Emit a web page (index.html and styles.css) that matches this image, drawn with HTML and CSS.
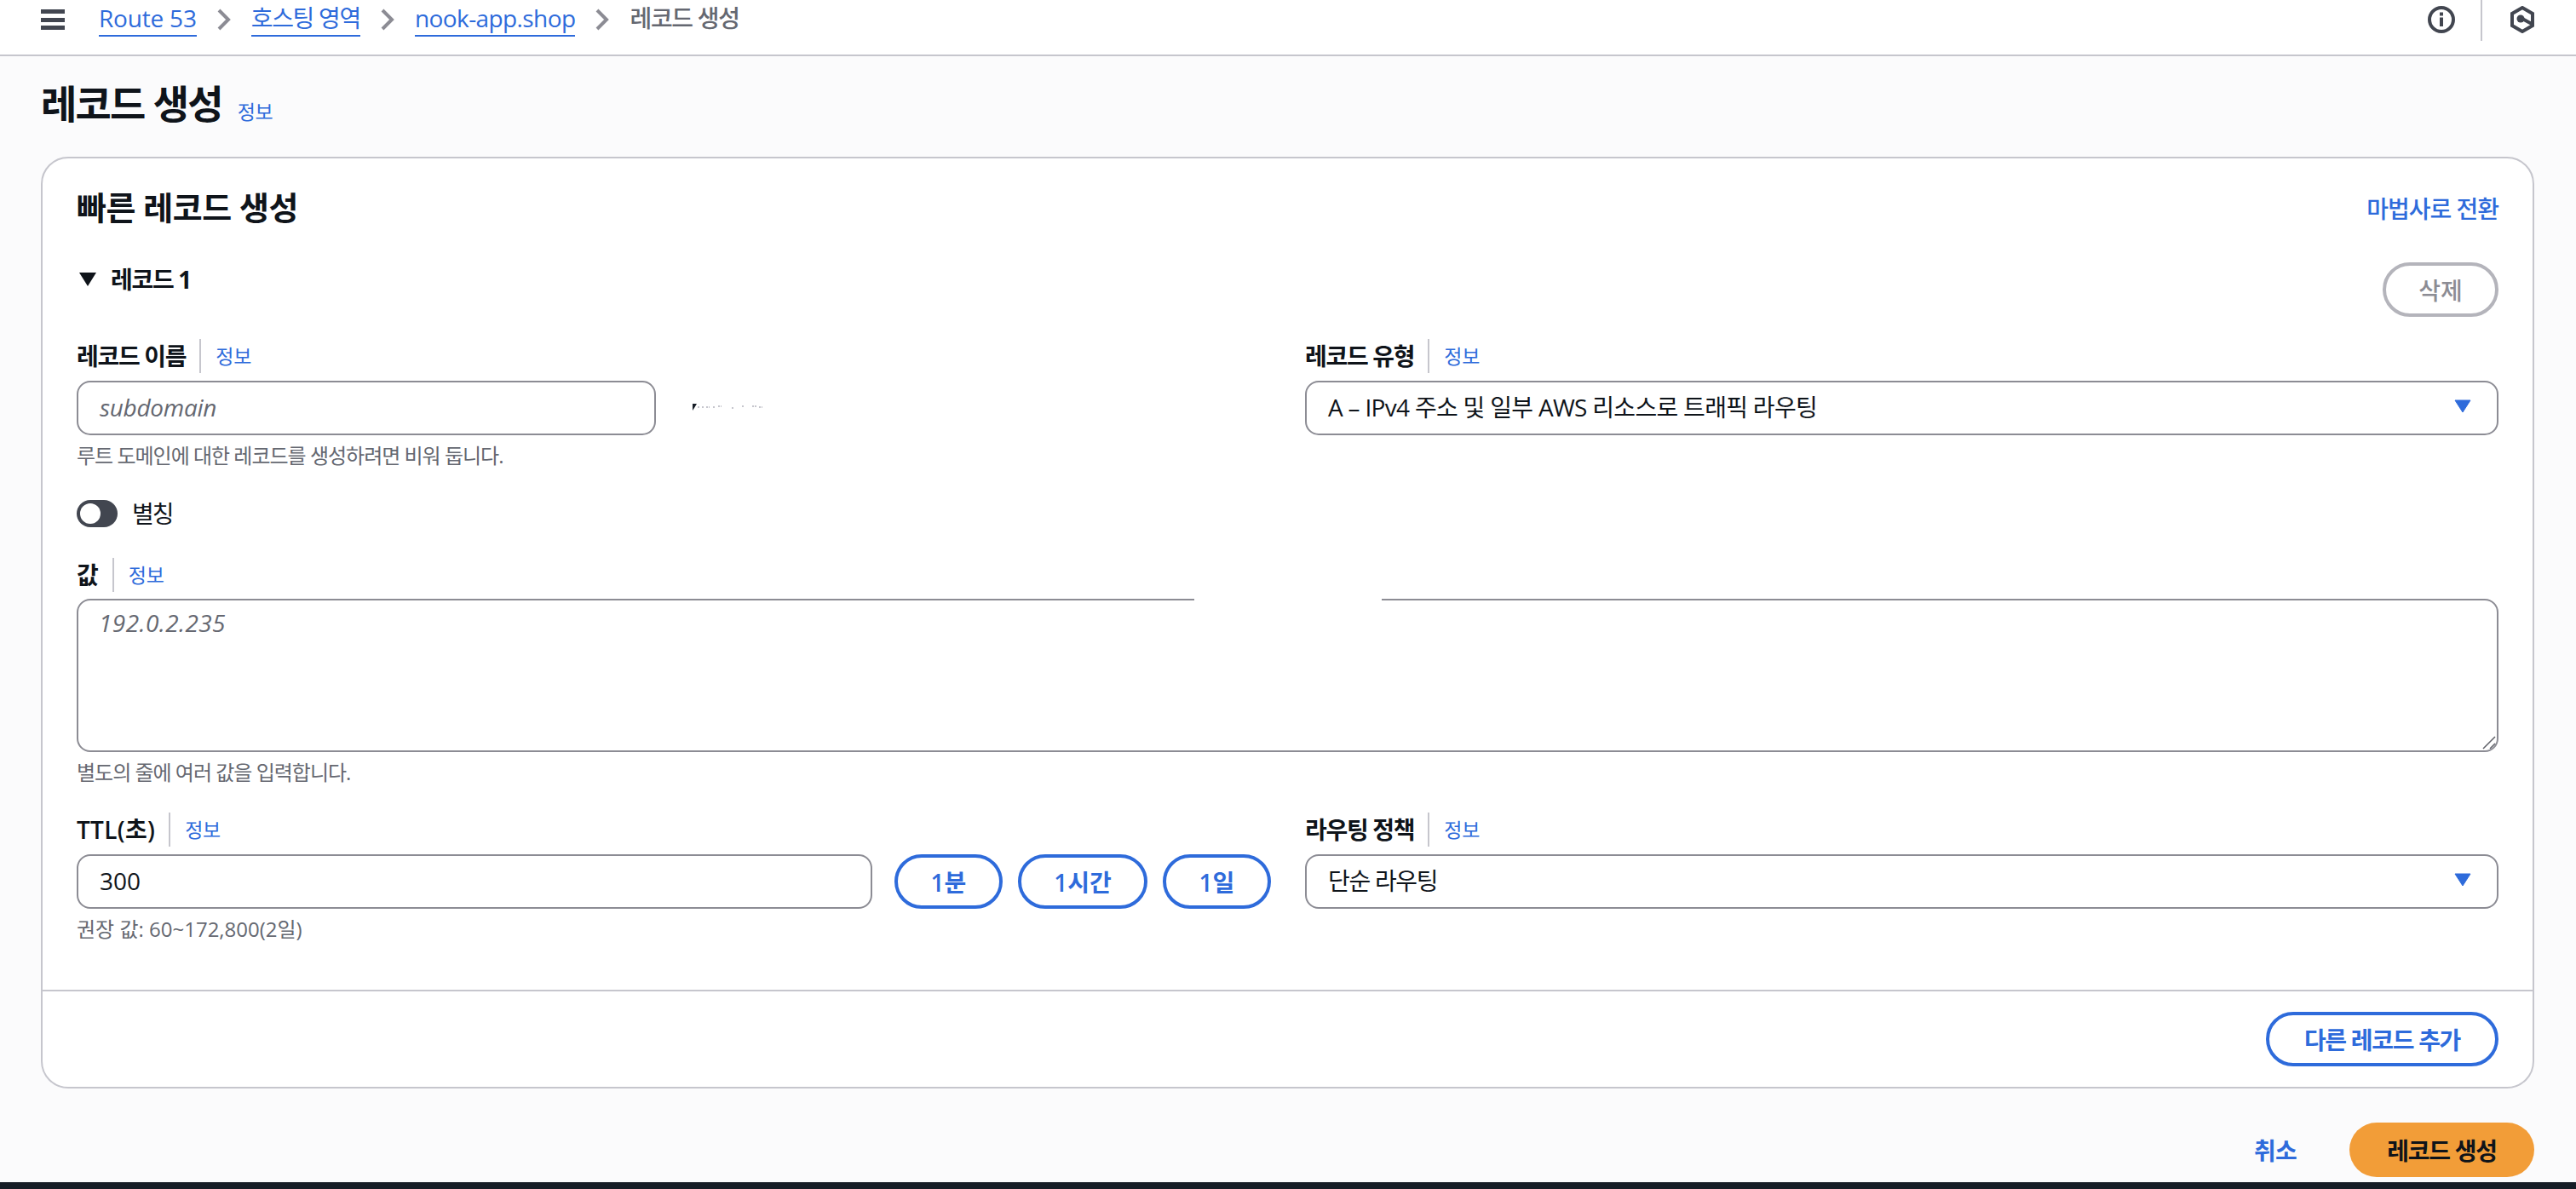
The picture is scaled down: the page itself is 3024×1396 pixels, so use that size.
FILE: index.html
```html
<!DOCTYPE html>
<html lang="ko">
<head>
<meta charset="utf-8">
<title>레코드 생성</title>
<link rel="stylesheet" href="styles.css">
</head>
<body>
<header class="topbar">
  <svg class="burger" width="28" height="24" viewBox="0 0 28 24"><path d="M0 0h28v5H0zM0 10h28v5H0zM0 19h28v5H0z" fill="#424650"/></svg>
  <nav class="crumbs">
    <a class="crumb crumb-latin">Route 53</a>
    <svg class="chev" width="18" height="26" viewBox="0 0 18 26"><path d="M3 2l11 11L3 24" fill="none" stroke="#8c8c94" stroke-width="4"/></svg>
    <a class="crumb ko">호스팅 영역</a>
    <svg class="chev" width="18" height="26" viewBox="0 0 18 26"><path d="M3 2l11 11L3 24" fill="none" stroke="#8c8c94" stroke-width="4"/></svg>
    <a class="crumb crumb-domain">nook-app.shop</a>
    <svg class="chev" width="18" height="26" viewBox="0 0 18 26"><path d="M3 2l11 11L3 24" fill="none" stroke="#8c8c94" stroke-width="4"/></svg>
    <span class="crumb-current ko">레코드 생성</span>
  </nav>
  <div class="top-icons">
    <svg width="32" height="32" viewBox="0 0 32 32"><circle cx="16" cy="16" r="14" fill="none" stroke="#424650" stroke-width="4"/><path d="M14 13.500h4V24h-4zM14 7.500h4v4h-4z" fill="#424650"/></svg>
    <span class="top-sep"></span>
    <svg width="30" height="32" viewBox="0 0 30 32"><path d="M15 2l12 7v14l-12 7-12-7V9z" fill="none" stroke="#424650" stroke-width="4"/><circle cx="13" cy="15" r="4.500" fill="#424650"/><path d="M15 15l11 6" stroke="#424650" stroke-width="4"/></svg>
  </div>
</header>

<main class="page">
  <div class="title-row">
    <h1 class="title">레코드 생성</h1>
    <a class="info info-title">정보</a>
  </div>

  <section class="card">
    <div class="card-body">
      <div class="card-head">
        <h2 class="card-title">빠른 레코드 생성</h2>
        <a class="wizard">마법사로 전환</a>
      </div>
      <div class="record-head">
        <div class="record-title"><svg width="22" height="18" viewBox="0 0 22 18"><path d="M1 1h20L11 17z" fill="#0f141a"/></svg><span class="ko">레코드 1</span></div>
        <button class="btn btn-disabled">삭제</button>
      </div>

      <div class="two-col row-name">
        <div class="field">
          <div class="label-row"><span class="label ko">레코드 이름</span><a class="info">정보</a></div>
          <div class="name-line">
            <div class="control control-name placeholder">subdomain</div>
            <svg class="smudge" width="92" height="10" viewBox="0 0 92 10"><path d="M0 1v8l2-3 3-5z" fill="#161d26"/><path d="M6 5h3M11 5h3M16 5h4M24 5h3M30 4h4M46 6h2M58 4h2M70 4h6M78 5h4" stroke="#c6c6cd" stroke-width="2" stroke-dasharray="2 1"/></svg>
          </div>
          <p class="hint ko-hint">루트 도메인에 대한 레코드를 생성하려면 비워 둡니다.</p>
        </div>
        <div class="field">
          <div class="label-row"><span class="label ko">레코드 유형</span><a class="info">정보</a></div>
          <div class="control control-select ko-long">A – IPv4 주소 및 일부 AWS 리소스로 트래픽 라우팅
            <svg class="caret" width="20" height="16" viewBox="0 0 20 16"><path d="M1 1h18L10 15z" fill="#2e6bdb" stroke="#2e6bdb" stroke-linejoin="round"/></svg>
          </div>
        </div>
      </div>

      <div class="toggle-row"><span class="toggle"><span class="knob"></span></span><span class="toggle-label">별칭</span></div>

      <div class="field field-value">
        <div class="label-row"><span class="label">값</span><a class="info">정보</a></div>
        <div class="control control-area placeholder">192.0.2.235
          <span class="mask"></span>
          <svg class="grip" width="16" height="16" viewBox="0 0 16 16"><path d="M1 15L15 1M9 15l6-6" stroke="#5f6068" stroke-width="1.500" fill="none"/></svg>
        </div>
        <p class="hint ko-hint">별도의 줄에 여러 값을 입력합니다.</p>
      </div>

      <div class="two-col row-ttl">
        <div class="field">
          <div class="label-row"><span class="label label-ttl">TTL(초)</span><a class="info">정보</a></div>
          <div class="ttl-line">
            <div class="control control-ttl">300</div>
            <button class="btn btn-blue btn-short">1분</button>
            <button class="btn btn-blue btn-mid">1시간</button>
            <button class="btn btn-blue btn-short">1일</button>
          </div>
          <p class="hint">권장 값: 60~172,800(2일)</p>
        </div>
        <div class="field">
          <div class="label-row"><span class="label ko">라우팅 정책</span><a class="info">정보</a></div>
          <div class="control control-select ko">단순 라우팅
            <svg class="caret" width="20" height="16" viewBox="0 0 20 16"><path d="M1 1h18L10 15z" fill="#2e6bdb" stroke="#2e6bdb" stroke-linejoin="round"/></svg>
          </div>
        </div>
      </div>
    </div>
    <div class="card-foot"><button class="btn btn-blue btn-add ko">다른 레코드 추가</button></div>
  </section>

  <div class="actions">
    <a class="cancel">취소</a>
    <button class="btn btn-primary ko">레코드 생성</button>
  </div>
</main>
<div class="bottom-bar"></div>
</body>
</html>
```

FILE: styles.css
```css
* { box-sizing: border-box; }
html, body { margin: 0; height: 100%; }
body {
  height: 1396px;
  overflow: hidden;
  display: flex;
  flex-direction: column;
  background: #fbfbfc;
  color: #0f141a;
  font-family: "Open Sans", "Noto Sans CJK KR", sans-serif;
  font-size: 28px;
}
button { font-family: inherit; background: none; cursor: pointer; }
h1, h2, p { margin: 0; }
.ko { letter-spacing: -1.3px; }
.ko-long { letter-spacing: -0.7px; }

.topbar {
  height: 66px;
  flex: none;
  background: #fff;
  border-bottom: 2px solid #c6c6cd;
  display: flex;
  align-items: flex-start;
  padding-left: 48px;
}
.burger { margin-top: 11px; flex: none; }
.crumbs { display: flex; align-items: center; gap: 23px; margin-left: 40px; height: 46px; }
.crumb { color: #2e6bdb; border-bottom: 2px solid #2e6bdb; line-height: 38px; height: 41px; margin-top: -1px; }
.crumb-latin { letter-spacing: -0.2px; }
.crumb-domain { letter-spacing: -0.6px; }
.chev { flex: none; }
.crumb-current { color: #656871; line-height: 38px; height: 41px; margin-top: -1px; font-weight: 500; }
.top-icons { margin-left: auto; display: flex; align-items: flex-start; padding-right: 48px; padding-top: 7px; }
.top-sep { width: 2px; height: 48px; background: #c6c6cd; margin: -7px 32px 0 30px; }

.page { flex: 1; padding: 0 49px 0 48px; }
.title-row { height: 118px; display: flex; align-items: flex-start; }
.title { font-size: 46px; font-weight: 700; line-height: 60px; margin-top: 25px; letter-spacing: -1.8px; }
.info { color: #2e6bdb; font-size: 23px; line-height: 40px; letter-spacing: -0.3px; }
.info-title { margin: 45px 0 0 18px; }

.card { background: #fff; border: 2px solid #c6c6cd; border-radius: 32px; height: 1094px; }
.card-body { padding: 0 40px; height: 976px; }
.card-head { display: flex; justify-content: space-between; padding-top: 36px; height: 122px; }
.card-title { font-size: 38px; font-weight: 700; line-height: 42px; letter-spacing: -0.5px; }
.wizard { color: #2e6bdb; font-weight: 500; line-height: 42px; margin-top: 2px; letter-spacing: -1px; }
.record-head { display: flex; justify-content: space-between; align-items: flex-start; height: 63px; }
.record-title { display: flex; align-items: center; gap: 16px; font-weight: 700; line-height: 40px; padding-left: 2px; }

.btn { height: 64px; border-radius: 32px; border: 4px solid #2e6bdb; font-size: 28px; font-weight: 600; padding: 0; color: #2e6bdb; }
.btn-disabled { width: 136px; border-color: #b4b4bb; color: #8c8c94; font-weight: 500; }
.btn-short { width: 127px; flex: none; }
.btn-mid { width: 152px; flex: none; }
.btn-add { width: 273px; }
.btn-primary { width: 217px; background: #f29d38; border: 0; color: #0f141a; font-weight: 700; }

.two-col { display: grid; grid-template-columns: 1401px 1401px; column-gap: 41px; }
.row-name { margin-top: 27px; }
.field { min-width: 0; }
.label-row { display: flex; height: 40px; margin-bottom: 9px; }
.label { font-weight: 600; line-height: 40px; padding-right: 16px; border-right: 2px solid #c6c6cd; }
.label-ttl { letter-spacing: 0.3px; }
.label-row .info { padding-left: 17px; }
.control { border: 2px solid #8c8c94; border-radius: 16px; background: #fff; height: 64px; line-height: 58px; padding-left: 25px; position: relative; }
.placeholder { color: #656871; font-style: italic; }
.name-line { display: flex; align-items: flex-start; }
.control-name { width: 680px; flex: none; letter-spacing: -0.3px; }
.smudge { margin: 26px 0 0 43px; }
.control-select .caret { position: absolute; right: 30px; top: 20px; }
.hint { color: #656871; font-size: 24px; line-height: 34px; margin-top: 7px; }
.ko-hint { letter-spacing: -1px; }

.toggle-row { display: flex; align-items: center; gap: 17px; margin-top: 35px; height: 32px; }
.toggle { width: 48px; height: 32px; border-radius: 16px; background: #424650; padding: 4px; display: block; }
.knob { display: block; width: 24px; height: 24px; border-radius: 50%; background: #fff; }
.toggle-label { line-height: 32px; letter-spacing: -2px; }

.field-value { margin-top: 36px; }
.field-value .label-row { margin-bottom: 8px; }
.control-area { height: 180px; line-height: 34px; padding-top: 9px; padding-left: 24px; letter-spacing: 0.4px; }
.mask { position: absolute; left: 1310px; top: -4px; width: 220px; height: 8px; background: #fff; }
.grip { position: absolute; right: 1px; bottom: 1px; }

.row-ttl { margin-top: 30px; }
.ttl-line { display: flex; gap: 18px; }
.control-ttl { width: 934px; flex: none; margin-right: 8px; }

.card-foot { border-top: 2px solid #c6c6cd; height: 114px; display: flex; justify-content: flex-end; padding: 24px 40px 0 0; }

.actions { display: flex; justify-content: flex-end; align-items: center; gap: 62px; margin-top: 40px; }
.cancel { color: #2e6bdb; font-weight: 600; letter-spacing: -0.8px; }
.bottom-bar { height: 8px; flex: none; background: #161d26; }
```
